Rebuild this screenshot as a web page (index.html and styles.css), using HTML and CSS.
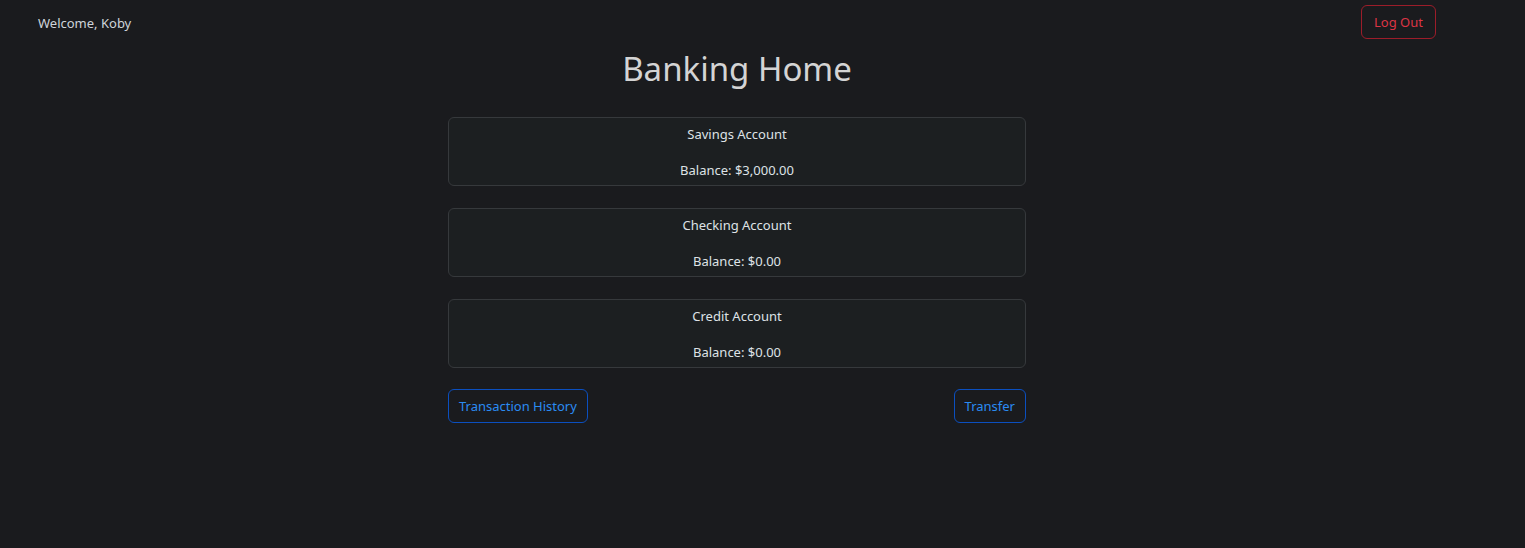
FILE: index.html
```html
<!DOCTYPE html>
<html lang="en">
<head>
<meta charset="utf-8">
<title>Banking Home</title>
<link rel="stylesheet" href="styles.css">
</head>
<body>
<div class="page">
  <header class="topbar">
    <span class="welcome">Welcome, Koby</span>
    <button class="btn btn-danger">Log Out</button>
  </header>
  <main class="main">
    <h1 class="title">Banking Home</h1>
    <section class="accounts">
      <div class="card">
        <p class="card-name">Savings Account</p>
        <p class="card-balance">Balance: $3,000.00</p>
      </div>
      <div class="card">
        <p class="card-name">Checking Account</p>
        <p class="card-balance">Balance: $0.00</p>
      </div>
      <div class="card">
        <p class="card-name">Credit Account</p>
        <p class="card-balance">Balance: $0.00</p>
      </div>
      <div class="actions">
        <button class="btn btn-primary">Transaction History</button>
        <button class="btn btn-primary">Transfer</button>
      </div>
    </section>
  </main>
</div>
</body>
</html>
```
FILE: styles.css
```css
html, body {
  margin: 0;
  padding: 0;
  background: #1a1b1e;
  height: 100%;
}
body {
  font-family: "Noto Sans", "Open Sans", sans-serif;
  font-size: 13px;
  color: #dee2e6;
}
.page {
  width: 1474px;
}
.topbar {
  display: flex;
  justify-content: space-between;
  align-items: center;
  padding: 5px 38px 0 38px;
  height: 34px;
}
.welcome {
  color: #ced4da;
  font-size: 13px;
  padding-top: 2px;
}
.btn {
  background: transparent;
  font-family: inherit;
  font-size: 13px;
  height: 34px;
  padding: 0 11px;
  border-radius: 6px;
  border: 1px solid;
  cursor: pointer;
  line-height: 1;
  padding-top: 1px;
}
.btn-danger {
  color: #dc3545;
  border-color: #9c1d2a;
  padding-left: 12px;
  padding-right: 12px;
}
.btn-primary {
  color: #2a8bf2;
  border-color: #0b4fbf;
  padding-left: 10px;
  padding-right: 10px;
}
.main {
  display: flex;
  flex-direction: column;
  align-items: center;
}
.title {
  margin: 8px 0 26px 0;
  font-size: 33px;
  font-weight: 400;
  color: #d4d4d4;
  line-height: 44px;
}
.accounts {
  width: 578px;
  display: flex;
  flex-direction: column;
  gap: 22px;
}
.card {
  box-sizing: border-box;
  height: 69px;
  border: 1px solid #36393c;
  border-radius: 6px;
  background: #1c1f21;
  display: flex;
  flex-direction: column;
  align-items: center;
  padding-top: 6px;
  gap: 15px;
}
.card p {
  margin: 0;
  line-height: 21px;
  font-size: 13px;
}
.actions {
  display: flex;
  justify-content: space-between;
  margin-top: -1px;
}
```
